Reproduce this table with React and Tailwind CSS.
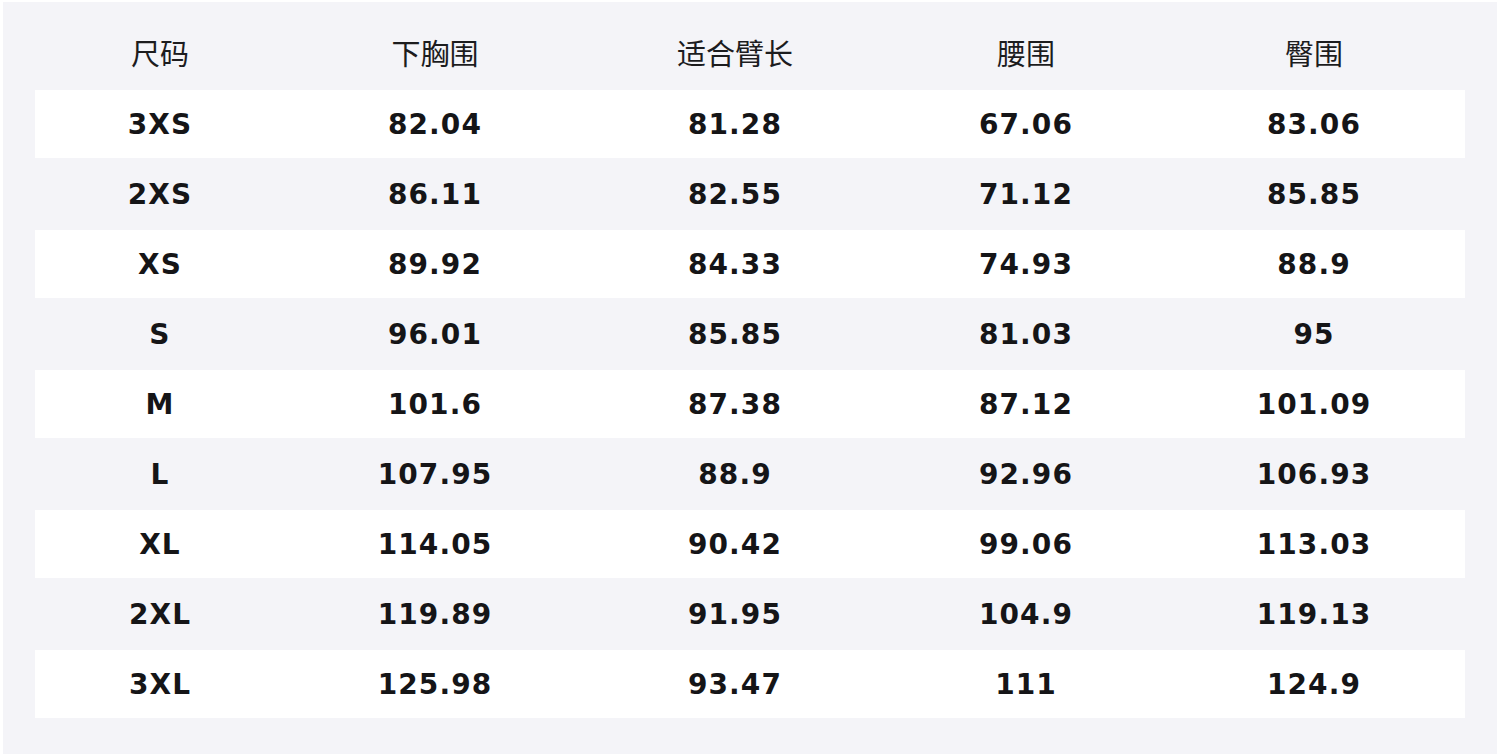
import React from 'react';

const headers = ['尺码', '下胸围', '适合臂长', '腰围', '臀围'];

const rows = [
    ['3XS', '82.04', '81.28', '67.06', '83.06'],
    ['2XS', '86.11', '82.55', '71.12', '85.85'],
    ['XS', '89.92', '84.33', '74.93', '88.9'],
    ['S', '96.01', '85.85', '81.03', '95'],
    ['M', '101.6', '87.38', '87.12', '101.09'],
    ['L', '107.95', '88.9', '92.96', '106.93'],
    ['XL', '114.05', '90.42', '99.06', '113.03'],
    ['2XL', '119.89', '91.95', '104.9', '119.13'],
    ['3XL', '125.98', '93.47', '111', '124.9'],
];

const cols = 'grid grid-cols-[250px_300px_300px_282px_294px]';

const App = () => {
    return (
        <div className="bg-white w-[1500px] h-[754px] overflow-hidden pt-[2px] px-[3px]">
            <div className="bg-[#f4f4f8] h-[800px] px-[32px]">
                {/* header */}
                <div className={`${cols} h-[88px] items-center text-[29px] text-[#1c1c1e] font-['Noto_Sans_CJK_SC',sans-serif]`}>
                    {headers.map(h => (
                        <div key={h} className="text-center pt-[14px]">{h}</div>
                    ))}
                </div>

                {/* rows */}
                <div className="flex flex-col gap-[2px]">
                    {rows.map((r, i) => (
                        <div
                            key={r[0]}
                            className={`${cols} h-[68px] pt-[2px] items-center text-[28px] font-bold tracking-[1.1px] text-[#151517] font-['DejaVu_Sans',sans-serif] ${i % 2 === 0 ? 'bg-white' : ''}`}
                        >
                            {r.map((c, j) => (
                                <div key={j} className="text-center">{c}</div>
                            ))}
                        </div>
                    ))}
                </div>
            </div>
        </div>
    );
};

export default App;
